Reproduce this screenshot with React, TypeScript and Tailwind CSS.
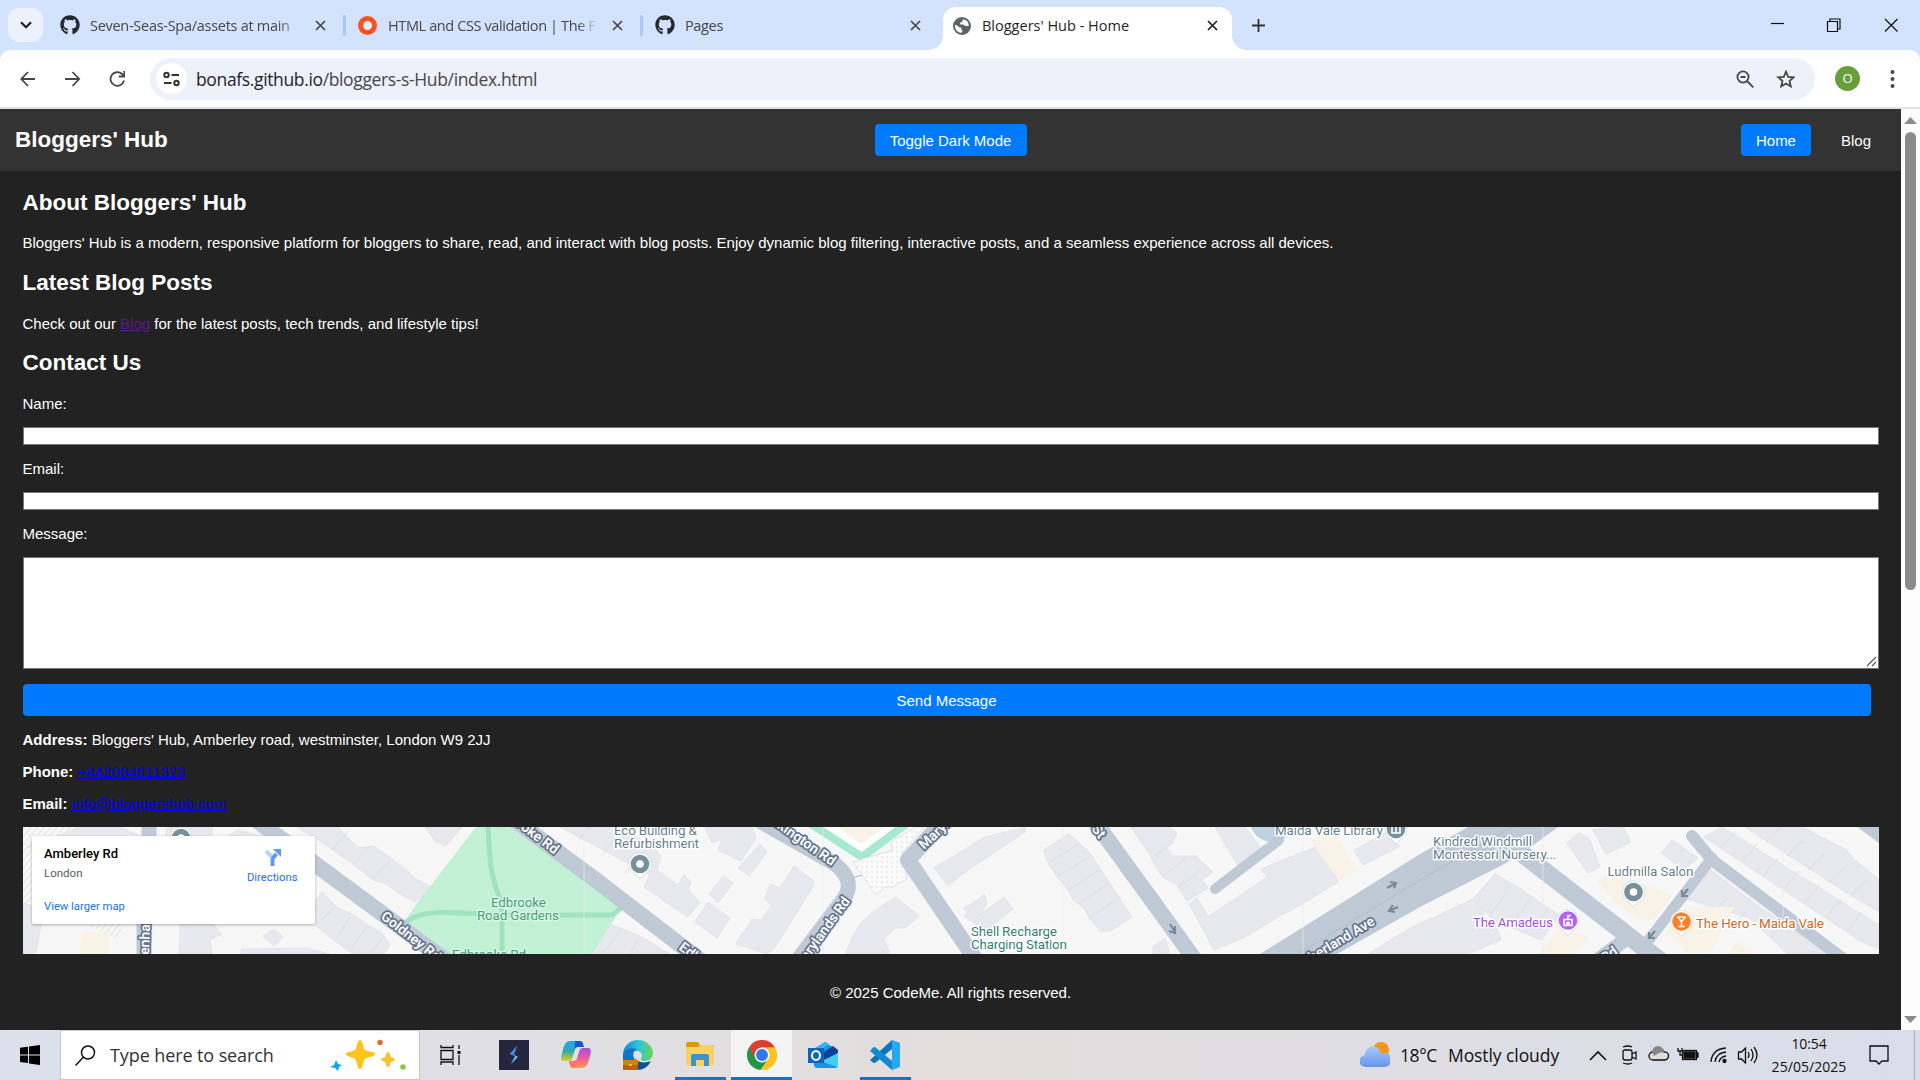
import type { ReactNode } from "react";
import { FaGithub } from "react-icons/fa";

const UI = "font-['Open_Sans','Noto_Sans',sans-serif]";

function Cross({ className = "" }: { className?: string }) {
  return (
    <svg className={`size-[11px] shrink-0 ${className}`} viewBox="0 0 11 11" fill="none" stroke="currentColor" strokeWidth="1.7">
      <path d="M1 1l9 9M10 1l-9 9" />
    </svg>
  );
}

function TabStrip() {
  return (
    <div className={`flex h-[50px] items-center bg-[#d3e3fd] text-[14.5px] tracking-[-0.35px] text-[#474747] ${UI}`}>
      <div className="ml-2 flex h-[34px] w-[35px] shrink-0 items-center justify-center rounded-[11px] bg-[#ebf1fd] text-[#1f1f1f]">
        <svg width="12" height="8" viewBox="0 0 12 8" fill="none" stroke="currentColor" strokeWidth="2.2"><path d="M1 1.3l5 5 5-5" /></svg>
      </div>
      <div className="ml-[17px] flex w-[286px] shrink-0 items-center">
        <FaGithub className="size-5 shrink-0 text-[#24292f]" />
        <span className="mt-px ml-[10px] w-[207px] shrink-0 tracking-[-0.28px] whitespace-nowrap [mask-image:linear-gradient(to_right,black_90%,rgba(0,0,0,.3)_100%)]">Seven-Seas-Spa/assets at main</span>
        <Cross className="ml-[18px]" />
        <i className="ml-[17px] h-[21px] w-[3px] shrink-0 rounded bg-[#a8c7fa]" />
      </div>
      <div className="flex w-[297px] shrink-0 items-center pl-3">
        <i className="h-[19px] w-[19px] shrink-0 rounded-full border-[5px] border-[#fc5220] bg-[#e9f0fa]" />
        <span className="mt-px ml-[11px] w-[210px] shrink-0 tracking-[-0.38px] whitespace-nowrap [mask-image:linear-gradient(to_right,black_90%,transparent_100%)]">HTML and CSS validation | The F</span>
        <Cross className="ml-[14px]" />
        <i className="ml-[17px] h-[21px] w-[3px] shrink-0 rounded bg-[#a8c7fa]" />
      </div>
      <div className="flex w-[300px] shrink-0 items-center pl-3">
        <FaGithub className="size-5 text-[#24292f]" />
        <span className="mt-px ml-[10px]">Pages</span>
        <Cross className="mr-[22px] ml-auto" />
      </div>
      <div className="relative flex h-[43px] w-[289px] shrink-0 items-center self-end rounded-t-[13px] bg-white px-[10px] pb-[6px] text-[#1f1f1f]">
        <i className="absolute bottom-0 -left-[14px] size-[14px] bg-[radial-gradient(circle_at_0_0,#d3e3fd_13.5px,#fff_14px)]" />
        <i className="absolute -right-[14px] bottom-0 size-[14px] bg-[radial-gradient(circle_at_100%_0,#d3e3fd_13.5px,#fff_14px)]" />
        <svg className="size-[18px] shrink-0" viewBox="0 0 18 18">
          <circle cx="9" cy="9" r="9" fill="#5f6368" />
          <path d="M2 8c3 0 3 2 5.500 2.500 2 .5 0 2.500 1.800 3 .8.500-.3 1.500-1.300 2.500A7 7 0 0 1 2 8zM10.500 2.200C9 3.500 10 4.200 8.500 5c-1.700.7-2 2-1 2.500 2.500.2 2.800-.3 4.500 1.200 1 .8 2.200 0 3.800.3A7 7 0 0 0 10.500 2.200z" fill="#fff" />
        </svg>
        <span className="ml-[11px] tracking-[0px]">Bloggers' Hub - Home</span>
        <Cross className="mr-[4px] ml-auto" />
      </div>
      <svg className="ml-[20px] size-[13px] shrink-0" viewBox="0 0 13 13" stroke="#333" strokeWidth="1.800"><path d="M6.500 0v13M0 6.500h13" /></svg>
      <svg className="mr-[22px] ml-auto h-[14px] w-[127px]" viewBox="0 0 127 14" fill="none" stroke="#111" strokeWidth="1.200">
        <path d="M0 5.500h13" /><path d="M56.500 3.500h10v10h-10zM59 3.500V1h10v10h-2.500" /><path d="M114 1l12.500 12.500M126.500 1L114 13.500" />
      </svg>
    </div>
  );
}

function Toolbar() {
  return (
    <div className="bg-[#d3e3fd]">
      <div className="flex h-[59px] items-center rounded-t-[10px] border-b-2 border-[#dfe3e3] bg-white text-[#474747]">
        <svg className="ml-5 h-4 w-[105px] shrink-0" viewBox="0 0 105 16" fill="none" stroke="currentColor" strokeWidth="1.800">
          <path d="M15 8H1.500M8 1L1.300 8 8 15M45 8h14M52.500 1l6.700 7-6.700 7" />
          <path d="M104 9.500a6.800 6.800 0 1 1-2-6.500l1.800 2M104.300 0v5.500h-5.500" />
        </svg>
        <div className={`ml-[25px] flex h-[42px] w-[1665px] shrink-0 items-center rounded-full bg-[#ecf1fa] pl-[6px] ${UI}`}>
          <span className="flex size-[31px] items-center justify-center rounded-full bg-white">
            <svg width="17" height="16" viewBox="0 0 17 16" fill="none" stroke="#333" strokeWidth="2"><circle cx="3.500" cy="4" r="2.200" /><path d="M8.500 4H16M1 12h7.500" /><circle cx="13.500" cy="12" r="2.200" /></svg>
          </span>
          <span className="mt-[2px] ml-[9px] text-[17.500px] tracking-[-0.360px]"><span className="text-[#1f1f1f]">bonafs.github.io</span>/bloggers-s-Hub/index.html</span>
          <svg className="mt-px mr-[20px] ml-auto h-[18px] w-[59px]" viewBox="0 0 59 18" fill="none" stroke="currentColor" strokeWidth="1.800">
            <circle cx="7" cy="7" r="5.600" /><path d="M11 11l6.300 6.300M4.500 7h5" />
            <path d="M50 1.700l2.200 5.100 5.500.5-4.200 3.700 1.300 5.400-4.800-2.900-4.800 2.900 1.300-5.400-4.200-3.700 5.500-.5z" />
          </svg>
        </div>
        <span className={`ml-5 flex size-[25px] items-center justify-center rounded-full bg-[#689f38] text-[13px] text-white ${UI}`}>O</span>
        <svg className="ml-[30px]" width="5" height="20" viewBox="0 0 5 20" fill="currentColor"><circle cx="2.500" cy="3" r="2" /><circle cx="2.500" cy="10" r="2" /><circle cx="2.500" cy="17" r="2" /></svg>
      </div>
    </div>
  );
}

const buildings = [
  "23,903 44,909 36,953 23,953", "26,848 80,827 120,827 150,840 60,840", "168,827 212,827 212,836 165,836", "228,836 238,830 262,836",
  "297,827 338,827 358,848 374,846 396,862 407,870 413,877 432,888 415,902 402,895 386,884 373,880 353,864 333,850 315,838",
  "425,827 462,827 446,846 435,841", "180,924 213,924 222,934 210,940 212,954 179,954", "263,936 274,929 283,937 274,946", "241,949 306,948 330,954 241,954",
  "315,902 322,892 338,908 355,915 366,924 381,932 390,945 384,954 352,954 316,926",
  "600,936 610,924 640,936 670,954 592,954", "560,827 620,827 655,848 661,857 657,870 678,885 684,875 691,882 688,890 700,902 688,917 644,887 650,875",
  "705,827 752,827 756,838 741,861 718,850 722,839 712,843", "760,844 767,852 749,876 738,868", "724,876 733,883 718,903 709,894", "708,902 730,918 717,938 695,922",
  "794,866 814,881 812,888 774,949 767,954 736,944 742,933 746,930 752,919 761,920 771,906 765,898 770,884 780,888",
  "852,938 860,924 870,914 883,905 896,897 919,916 905,928 895,928 884,939 890,954 845,954", "934,868 985,837 1026,827 1025,832 960,876 948,886",
  "964,908 980,898 980,912 970,919", "964,916 984,894 987,902 977,925", "976,918 1004,897 1013,909 984,932 975,923",
  "1043,850 1069,834 1090,853 1132,917 1110,931 1100,931 1090,919 1084,908 1073,900 1067,888 1058,878 1049,865",
  "1131,827 1169,827 1177,833 1171,845 1166,847 1173,856 1196,856 1205,865 1213,872 1202,880 1208,888 1187,901 1176,884 1163,878 1154,864 1150,855",
  "1215,827 1245,827 1261,848 1238,866", "1189,904 1197,898 1208,916 1239,896 1267,877 1261,869 1275,863 1321,845 1338,882 1302,904 1280,916 1245,937 1214,950",
  "1354,850 1380,836 1386,832 1400,846 1363,865", "1153,947 1165,938 1170,954 1153,954",
  "1368,954 1410,928 1480,896 1492,903 1480,920 1494,920 1501,940 1468,954", "1473,899 1495,874 1516,886 1550,909 1560,916 1541,940 1493,920",
  "1567,843 1579,833 1589,838 1600,867 1588,873", "1593,830 1612,827 1623,827 1631,842 1606,854", "1661,853 1672,840 1698,858 1684,870",
  "1704,837 1722,827 1879,925 1879,949 1862,942", "1745,827 1802,827 1845,849 1855,860 1879,880 1879,912 1842,890",
  "1687,899 1711,870 1760,907 1830,954 1788,954 1749,918",
];

const roads: [string, number][] = [
  ["M149 820V860L144 910V960", 15], ["M240 808L315 864L445 960", 16], ["M505 813L593 878L700 960", 16],
  ["M735 807L835 864Q855 880 845 897L796 962", 15], ["M950 814L908 860L980 966", 16], ["M1090 815L1198 964", 16],
  ["M1215 889L1279 840", 10], ["M1520 852L1662 962", 18], ["M1692 836L1712 860L1850 964", 12], ["M1712 858L1645 945", 11], ["M1625 940L1600 958", 14], ["M1850 812L1890 842", 15],
];

function Pin({ x, y, color, children }: { x: number; y: number; color: string; children?: ReactNode }) {
  return (
    <g transform={`translate(${x} ${y})`}>
      <path d="M-7 8L0 15L7 8z" fill="#fff" stroke="#c5c9cc" strokeWidth=".6" />
      <circle r="11" fill="#fff" stroke="#d3d6da" strokeWidth=".7" />
      <path d="M-6 8L0 14L6 8z" fill="#fff" />
      <circle r="9.300" fill={color} />
      {children ?? <circle r="3.800" fill="#fff" />}
    </g>
  );
}

function StreetMap() {
  return (
    <svg className="block h-full w-full font-[Roboto,sans-serif]" viewBox="23 827 1856 127">
      <defs>
        <pattern id="hatch" width="5" height="5" patternUnits="userSpaceOnUse" patternTransform="rotate(40)"><path d="M0 0V5" stroke="#dddfe3" strokeWidth="1.500" /></pattern>
        <pattern id="dots" width="5" height="5" patternUnits="userSpaceOnUse"><rect width="5" height="5" fill="#fbfbfb" /><circle cx="2" cy="2" r=".8" fill="#d5d8dc" /></pattern>
      </defs>
      <rect x="23" y="827" width="1856" height="127" fill="#f7f7f7" />
      <path d="M23 827h60L23 912zM85 924h39l-5 16z" fill="url(#hatch)" />
      <g fill="#e8e9ee" stroke="#e0e1e7" strokeWidth=".8">{buildings.map((p) => <polygon key={p} points={p} />)}</g>
      <g stroke="#dcdee4" strokeWidth="1" fill="none">
        <path d="M333 850l15-19M353 864l17-18M373 878l18-18M335 907l-16 15M350 917l-14 22M367 926l-15 22M384 936l-14 18" />
        <path d="M579 840l10-13M602 855l20-27M625 873l26-27M620 932l-16 20M638 940l-8 14M1050 862l29-18M1058 876l31-19M1069 890l30-20M1078 904l31-21M1088 918l33-21M1155 856l19-14M1166 874l20-16M1178 888l23-18" />
        <path d="M1721 848l14-16M1742 862l15-18M1763 876l15-18M1784 889l15-18M1805 903l15-18M1826 917l15-18M1847 931l15-18M1766 842l14-14M1787 856l16-15M1808 870l16-16M1829 883l16-16M1850 897l17-17M1710 916l17-18M1729 929l17-18M1771 938l13-16M1489 917l18-25M1511 926l18-25M1533 930l15-22" />
      </g>
      <g fill="#f8f3e6">
        <path d="M81 932h28v22H80z" /><path d="M1310 840l23-11 24 42-18 10z" /><path d="M1597 880l13-8 62 23-19 25-16 0-26-22z" /><path d="M1539 954l20-26 30 8-13 18z" /><path d="M1665 932l22-25 47 0-24 46-22 0z" /><path d="M1727 954l10-12 18 12z" />
      </g>
      <path d="M476 827H517L622 907L592 954H445L405 921L417 903Z" fill="#c3f1d5" />
      <g fill="none" stroke="#9fe3bf" strokeWidth="5"><path d="M488 827C490 875 493 880 502 905V954" /><path d="M405 923C420 910 440 911 500 915H612L621 908" /></g>
      <path d="M816 827L862 854L901 827Z" fill="#fff" /><path d="M838 827h48l-25 17z" fill="#f8f3e6" />
      <path d="M805 820L862 857L914 818" fill="none" stroke="#a7e8d0" strokeWidth="8" />
      <path d="M853 862L893 850L891 842L916 827L924 827L902 853L907 879L893 887L885 887L876 895Z" fill="url(#dots)" stroke="#dfe1e4" />
      <circle cx="1272" cy="820" r="22" fill="#bdd3e2" />
      <g fill="none" stroke="#c0cad7" strokeLinecap="round" strokeLinejoin="round">{roads.map(([d, w]) => <path key={d} d={d} strokeWidth={w} />)}</g>
      <path d="M1260 954L1420 854L1468 827H1558L1516 858L1420 907L1337 954Z" fill="#c0cad7" />
      <path d="M1298 954L1420 880L1512 827M853 878l9-3" fill="none" stroke="#b0bfcc" strokeWidth="1.200" />
      <g stroke="#e9eaed" strokeWidth=".7"><path d="M584 827V954M823 827V954M1063 827V954M1303 827V954M1543 827V954M1783 827V954" /></g>
      <g fill="none" stroke="#768b98" strokeWidth="2.200">
        <path d="M1387 888l9-5M1390 882l6 1-2 5M1398 907l-9 4M1393 905l-4 6 6 1M1170 924l5 8M1175 926v7l-6-2M1688 889l-6 7M1682 890v6l6 0M1655 931l-6 7M1649 932v6l6 0" />
      </g>

      <g fontSize="14" fontWeight="600" fill="#fff" stroke="#66758d" strokeWidth="3.500" paintOrder="stroke" strokeLinejoin="round">
        <text transform="translate(380 918) rotate(38)">Goldney Rd</text>
        <text transform="translate(491 807) rotate(37)">Edbrooke Rd</text>
        <text transform="translate(678 949) rotate(37)">Edbrooke Rd</text>
        <text transform="translate(767 821) rotate(35)">Elkington Rd</text>
        <text transform="translate(800 971) rotate(-54)">Marylands Rd</text>
        <text transform="translate(924 850) rotate(-43)">Marylands Rd</text>
        <text transform="translate(149 955) rotate(-88)">enham</text>
        <text transform="translate(1091 829) rotate(52)">St</text>
        <text transform="translate(1294 973) rotate(-31)">Sutherland Ave</text>
        <text transform="translate(1605 963) rotate(-35)">Rd</text>
      </g>
      <g fontSize="13.500" fill="#647f8d" stroke="#fff" strokeWidth="3" paintOrder="stroke" strokeLinejoin="round">
        <text x="614" y="835" textLength="83">Eco Building &amp;</text><text x="614" y="848" textLength="85">Refurbishment</text>
        <text x="1275" y="835" textLength="108">Maida Vale Library</text>
        <text x="1433" y="845.500" textLength="99">Kindred Windmill</text><text x="1433" y="859" textLength="123">Montessori Nursery...</text>
        <text x="1607.500" y="875.500" textLength="86">Ludmilla Salon</text>
        <g fill="#4c9d7d" stroke="#d7f6e3"><text x="491" y="906.500" textLength="55">Edbrooke</text><text x="477" y="919.500" textLength="82">Road Gardens</text><text x="452" y="959" textLength="74">Edbrooke Rd</text></g>
        <g fill="#2d8070"><text x="971" y="935.500" textLength="86">Shell Recharge</text><text x="971" y="948.500" textLength="96">Charging Station</text></g>
        <text x="1473" y="927" fill="#9d4fe5" textLength="80">The Amadeus</text><text x="1696" y="928" fill="#d56720" textLength="128">The Hero - Maida Vale</text>
      </g>
      <Pin x={640} y={864} color="#78909c" /><Pin x={1633.500} y={892} color="#78909c" />
      <Pin x={181} y={838} color="#78909c" />
      <Pin x={1396} y={829} color="#78909c"><path d="M-4-4h8v8h-8zM0-4v8" fill="none" stroke="#fff" strokeWidth="1.600" /></Pin>
      <Pin x={1568} y={920.500} color="#b362f3"><path d="M-4-1h8v6H1V2h-2v3h-3zM0-1v-4h3" fill="none" stroke="#fff" strokeWidth="1.600" /></Pin>
      <Pin x={1681.500} y={921.500} color="#fb8125"><path d="M-4.500-4.500h9M-3.500-4L0 0l3.500-4M0 0v5M-3 5h6" fill="none" stroke="#fff" strokeWidth="1.500" /></Pin>
    </svg>
  );
}

function MapPanel() {
  return (
    <div className="relative mt-[11px] h-[127px] w-[1856px] overflow-hidden">
      <StreetMap />
      <div className="absolute top-[9px] left-[9px] flex h-[88px] w-[283px] justify-between rounded-[2px] bg-white pr-[17px] pl-[12.500px] font-[Roboto,sans-serif] shadow-[0_1px_3px_rgba(0,0,0,.3)]">
        <div className="pt-[10px] text-[11.500px] leading-4">
          <div className="text-[13px] font-medium text-black">Amberley Rd</div>
          <div className="mt-[3px] text-[#5b5b5b]">London</div>
          <div className="mt-[18px] text-[11.250px] text-[#1a73e8]">View larger map</div>
        </div>
        <div className="flex flex-col items-center pt-[13px] text-[11.250px] text-[#1a73e8]">
          <svg width="17" height="17" viewBox="0 0 17 17"><path d="M2 2l7 7" stroke="#b6d3f8" strokeWidth="4" /><path d="M8.500 17v-6q0-2 4-6" fill="none" stroke="#5e9ce9" strokeWidth="4" /><path d="M9 0h8v8z" fill="#5e9ce9" /></svg>
          <span className="mt-1 leading-4">Directions</span>
        </div>
      </div>
    </div>
  );
}

function Page() {
  return (
    <div className="h-[921px] w-[1901px] bg-[#222] font-['Liberation_Sans',Arial,sans-serif] text-[15px] leading-6 text-white">
      <header className="flex h-[62px] items-center justify-between bg-[#333] px-[15px]">
        <h1 className="w-[715px] text-[22.500px] font-bold">Bloggers' Hub</h1>
        <button className="h-8 w-[152px] rounded-[4px] bg-[#007bff] pt-[2px]">Toggle Dark Mode</button>
        <nav className="flex w-[715px] justify-end"><a className="mr-[15px] flex h-8 items-center rounded-[4px] bg-[#007bff] px-[15px] pt-[2px]">Home</a><a className="flex h-8 items-center px-[15px] pt-[2px]">Blog</a></nav>
      </header>
      <main className="flex flex-col pt-5 pl-[22.500px]">
        <h2 className="text-[22.500px] font-bold">About Bloggers' Hub</h2>
        <p className="mt-4">Bloggers' Hub is a modern, responsive platform for bloggers to share, read, and interact with blog posts. Enjoy dynamic blog filtering, interactive posts, and a seamless experience across all devices.</p>
        <h2 className="mt-4 text-[22.500px] font-bold">Latest Blog Posts</h2>
        <p className="mt-[17px]">Check out our <a className="text-[#551a8b] underline">Blog</a> for the latest posts, tech trends, and lifestyle tips!</p>
        <h2 className="mt-[15px] text-[22.500px] font-bold">Contact Us</h2>
        <label className="mt-[17px]">Name:</label>
        <input className="mt-[11px] h-[18px] w-[1856px] border border-[#767676] bg-white" />
        <label className="mt-3">Email:</label>
        <input className="mt-[11px] h-[18px] w-[1856px] border border-[#767676] bg-white" />
        <label className="mt-3">Message:</label>
        <div className="mt-[11px] flex h-[112px] w-[1856px] items-end justify-end border border-[#767676] bg-white">
          <svg width="12" height="12" viewBox="0 0 12 12" stroke="#555" strokeWidth="1.200"><path d="M1 10L10 1M6 10l4-4" /></svg>
        </div>
        <button className="mt-[15px] h-8 w-[1848px] rounded-[4px] bg-[#007bff] pt-[2px]">Send Message</button>
        <p className="mt-3"><b>Address:</b> Bloggers' Hub, Amberley road, westminster, London W9 2JJ</p>
        <p className="mt-2"><b>Phone:</b> <a className="text-[#0000ee] underline">+442084611323</a></p>
        <p className="mt-2"><b>Email:</b> <a className="text-[#0000ee] underline">info@bloggershub.com</a></p>
        <MapPanel />
      </main>
      <footer className="mt-[27px] text-center">© 2025 CodeMe. All rights reserved.</footer>
    </div>
  );
}

function Scrollbar() {
  return (
    <div className="flex h-[921px] w-[19px] flex-col items-center bg-[#fcfcfc] text-[#8b8b8b]">
      <svg className="mt-2 shrink-0" width="13" height="7" viewBox="0 0 13 7" fill="currentColor"><path d="M6.500 0L13 7H0z" /></svg>
      <i className="mt-2 h-[458px] w-[11px] rounded-full bg-[#8b8b8b]" />
      <svg className="mt-auto mb-[7px] shrink-0" width="13" height="7" viewBox="0 0 13 7" fill="currentColor"><path d="M0 0h13L6.500 7z" /></svg>
    </div>
  );
}

function Slot({ active, open, children }: { active?: boolean; open?: boolean; children: ReactNode }) {
  return (
    <div className={`flex h-[50px] shrink-0 flex-col items-center ${active ? "w-[61px] bg-[#f4f3f3]" : "w-[62px]"}`}>
      <div className="flex h-[47px] items-center pt-[3px]">{children}</div>
      {(open || active) && <i className={`h-[3px] bg-[#0078d7] ${active ? "w-full" : "w-[51px]"}`} />}
    </div>
  );
}

function Taskbar() {
  return (
    <div className={`flex h-[50px] items-center bg-linear-to-r from-[#dbe1eb] via-[#e4dedd] to-[#d8deea] text-[#111] ${UI}`}>
      <div className="flex w-[60px] shrink-0 justify-center">
        <svg width="20" height="20" viewBox="0 0 20 20"><path d="M0 2.800l8-1.100v7.700H0zM9 1.500L20 0v9.400H9zM0 10.400h8v7.700L0 17zM9 10.400h11V20L9 18.400z" /></svg>
      </div>
      <div className="flex h-[50px] w-[360px] shrink-0 items-center border border-[#c6c7c8] bg-white pl-[14px]">
        <svg width="21" height="21" viewBox="0 0 21 21" fill="none" stroke="#111" strokeWidth="1.500"><circle cx="13" cy="7.500" r="6.500" /><path d="M8.500 12L.5 20.500" /></svg>
        <span className="ml-[14px] text-[18px] tracking-[-0.100px] whitespace-nowrap text-[#333]">Type here to search</span>
        <svg className="mr-[13px] ml-auto" width="76" height="32" viewBox="0 0 76 32">
          <path d="M30 1c3 0 3 9 5 10 2 2 10 1 10 4s-8 3-10 5-2 10-5 10-3-8-5-10-9-2-9-5 7-2 9-4 2-10 5-10z" fill="#fcc419" />
          <path d="M58 13c2 0 2 5 3 5 1 1 4 1 4 2.500s-3 1.500-4 2.500-1 5-3 5-2-4-3-5-4-1-4-2.500 3-1.500 4-2.500 1-5 3-5z" fill="#fbc02d" />
          <path d="M6 21l2 4 4 1-3 2-1 4-3-3-5-1 4-2z" fill="#12a5ea" /><circle cx="50" cy="3.500" r="2.700" fill="#ee662f" /><circle cx="73" cy="28" r="2.700" fill="#83c940" />
        </svg>
      </div>
      <div className="-ml-px flex w-[64px]">
        <Slot><svg width="21" height="20" viewBox="0 0 21 20" fill="none" stroke="#111" strokeWidth="1.300"><path d="M1 5.500h12v9H1zM1 0v2.500h12V0M1 20v-3h12v3M19 0v4M19 10v10" /><path d="M17.500 6h3v3h-3z" fill="#111" stroke="none" /></svg></Slot>
      </div>
      <Slot>
        <svg width="30" height="30" viewBox="0 0 30 30"><path d="M0 0h30v30H0z" fill="#26253e" /><path d="M18 6l-7 8 5 2-4 8 7-7-5-3z" fill="#56c5ee" /><path d="M18 6l-7 8 4 1z" fill="#4388e8" /></svg>
      </Slot>
      <Slot>
        <svg width="30" height="30" viewBox="0 0 30 30">
          <defs>
            <linearGradient id="cpA" x1="0" y1="0" x2="0" y2="1"><stop stopColor="#22a5ef" /><stop offset=".5" stopColor="#31a8aa" /><stop offset="1" stopColor="#e2cc20" /></linearGradient>
            <linearGradient id="cpB" x1="0" y1="0" x2="0" y2="1"><stop stopColor="#a451e8" /><stop offset=".5" stopColor="#ea5a9a" /><stop offset="1" stopColor="#ff9c50" /></linearGradient>
          </defs>
          <path d="M9 1h10c3 0 3 4 4 6h-6c-3 0-3 3-4 6-2 6-2 8-6 8H3c-4 0-3-4-2-8C3 6 4 1 9 1z" fill="url(#cpA)" />
          <path d="M14 1h5c3 0 3 4 4 6h-6c-2 0-3 1-3.500 3z" fill="#1857c8" />
          <path d="M21 28H12c-3 0-3-4-4-7h5c3 0 3-3 4-6 2-6 2-7 6-7h4c4 0 3 5 2 8-2 7-3 12-8 12z" fill="url(#cpB)" />
          <path d="M8 21h5c2 0 3-1 3.500-3L14 28h-2c-3 0-3-4-4-7z" fill="#fa7b62" />
        </svg>
      </Slot>
      <Slot>
        <svg width="30" height="30" viewBox="0 0 30 30">
          <defs><linearGradient id="edge"><stop stopColor="#1387d5" /><stop offset=".5" stopColor="#2fc1dd" /><stop offset="1" stopColor="#65dc50" /></linearGradient></defs>
          <path d="M0 15C0 6 7 0 15 0s15 6 15 13c0 5-4 8-8 8-3 0-5-2-4-3 2-2 1-7-4-7-7 0-9 7-8 11H0z" fill="url(#edge)" />
          <path d="M0 14c2-5 9-8 14-4-4 0-5 5-2 10h-12z" fill="#1272c3" />
          <path d="M12 17c1 5 8 7 16 4-3 6-8 9-14 9z" fill="#0d5296" />
          <path d="M0 20h15v10H0z" fill="#b66507" /><path d="M0 20h15v5H0z" fill="#d98208" /><path d="M6.500 24h2v2h-2z" fill="#ffe34f" />
        </svg>
      </Slot>
      <Slot open>
        <svg width="28" height="26" viewBox="0 0 28 26"><path d="M0 2q0-2 2-2h10l2 3H28v9H0z" fill="#d99a09" /><path d="M0 5h12l3-2h11q2 0 2 2v17q0 2-2 2H2q-2 0-2-2z" fill="#fdd260" /><path d="M5 24V14q0-2 2-2h14q2 0 2 2v10h-5v-6h-8v6z" fill="#3b93d4" /></svg>
      </Slot>
      <Slot active>
        <svg width="30" height="30" viewBox="0 0 30 30">
          <path d="M15 15L2 7.500A15 15 0 0 0 13.500 30L21.500 18.700z" fill="#249547" />
          <path d="M15 15L21.500 18.700 14 30A15 15 0 0 0 28 7.500H15z" fill="#fcc31e" />
          <path d="M15 7.500h13A15 15 0 0 0 2 7.500l6.500 11.200z" fill="#dc3f31" />
          <circle cx="15" cy="15" r="7.500" fill="#fff" /><circle cx="15" cy="15" r="6" fill="#2f7bee" />
        </svg>
      </Slot>
      <Slot>
        <svg width="30" height="28" viewBox="0 0 30 28">
          <path d="M4 9L17 1l12 8v16q0 2-2 2H9q-3 0-3-3z" fill="#1795df" /><path d="M5 9L17 1l4 2L7 14z" fill="#36b5ee" /><path d="M13 13L25 5l5 4v3L17 20z" fill="#123f97" />
          <path d="M6 24L30 12v13q0 2-3 2H9z" fill="#43cdf5" /><path d="M6 24v-6l23 8-2 1H9z" fill="#1792e5" />
          <path d="M0 7h16v15H0z" fill="#0b66c3" /><ellipse cx="8" cy="14.500" rx="4" ry="4.500" fill="none" stroke="#fff" strokeWidth="2" />
        </svg>
      </Slot>
      <Slot open>
        <svg width="30" height="30" viewBox="0 0 30 30"><path d="M22 0v9L5 23l-2-.5L0 20z" fill="#0877b9" /><path d="M22 30v-9L5 7l-2 .5L0 11z" fill="#118bd0" /><path d="M22 0l8 3v24l-8 3z" fill="#26a8f2" /></svg>
      </Slot>
      <svg className="ml-auto shrink-0" width="30" height="26" viewBox="0 0 30 26">
        <defs><linearGradient id="cloud" x1="0" y1="0" x2="0" y2="1"><stop stopColor="#a9cbfc" /><stop offset="1" stopColor="#6694e9" /></linearGradient></defs>
        <circle cx="21" cy="8" r="8" fill="#f7941e" /><path d="M6 25a6 6 0 0 1-1-12 8 8 0 0 1 16-1 7 7 0 1 1 3 13z" fill="url(#cloud)" />
      </svg>
      <span className="ml-[10px] w-[48px] shrink-0 text-[17.500px] tracking-[-0.400px]">18°C</span>
      <span className="w-[141px] shrink-0 text-[17.500px] tracking-[-0.080px] whitespace-nowrap">Mostly cloudy</span>
      <svg className="shrink-0" width="170" height="24" viewBox="1588 1043 170 24" fill="none" stroke="#111" strokeWidth="1.300">
        <path d="M1589 1060l8-8 8 8" strokeWidth="1.600" />
        <rect x="1622" y="1050" width="9" height="10" rx="2" /><path d="M1631 1054l4-2v7l-4-2M1622 1047q5-2 9 0M1622 1063q5 2 9 0" />
        <path d="M1652 1060a4 4 0 0 1 0-8 6 6 0 0 1 11 0 4 4 0 0 1 1 8z" fill="#ddd" /><path d="M1651 1052a6 6 0 0 1 12 0l-5 1-5 3z" fill="#888" stroke="none" />
        <rect x="1681.500" y="1050.500" width="14" height="9" /><path d="M1683 1052h11v6h-11zM1696 1053h1v4h-1z" fill="#111" /><path d="M1677 1048v3h4v-3M1679 1051v4h2" />
        <path d="M1710 1062q1-13 15-14M1714 1062q1-9 11-10M1718 1062q1-5 7-6" /><circle cx="1723.500" cy="1061" r="1.500" fill="#111" />
        <path d="M1737.500 1052h3l4-4v15l-4-4h-3zM1747 1052q2 3 0 6M1750 1049q4 6 0 12M1753 1047q6 8 0 16" />
      </svg>
      <div className="ml-[8px] w-[84px] shrink-0 text-center text-[14px] leading-[23px] tracking-[-0.100px]"><div>10:54</div><div className="tracking-[0.050px]">25/05/2025</div></div>
      <svg className="ml-[18px] shrink-0" width="20" height="20" viewBox="0 0 20 20" fill="none" stroke="#111" strokeWidth="1.300"><path d="M1 1h18v15h-6l-3 3-3-3H1z" /></svg>
      <i className="mr-[5px] ml-[25px] h-full w-px shrink-0 bg-[#aeb1b8]" />
    </div>
  );
}

export default function App() {
  return (
    <div className="h-[1080px] w-[1920px] overflow-hidden">
      <TabStrip />
      <Toolbar />
      <div className="flex"><Page /><Scrollbar /></div>
      <Taskbar />
    </div>
  );
}
